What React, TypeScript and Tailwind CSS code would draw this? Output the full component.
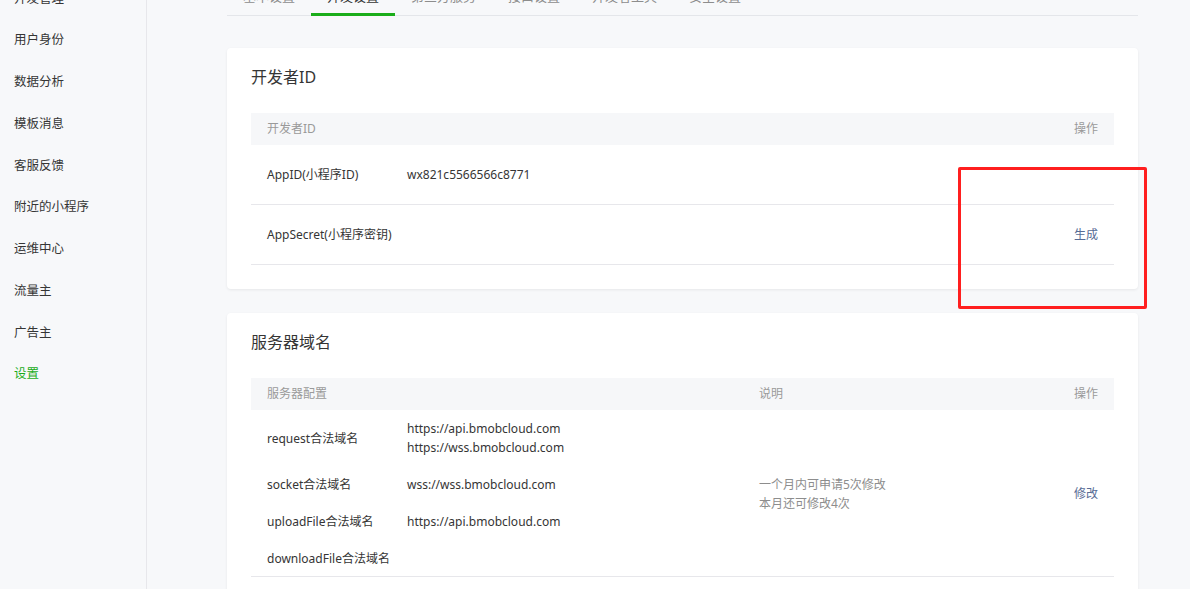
const menu = ["开发管理", "用户身份", "数据分析", "模板消息", "客服反馈", "附近的小程序", "运维中心", "流量主", "广告主", "设置"];
const tabs = ["基本设置", "开发设置", "第三方服务", "接口设置", "开发者工具", "安全设置"];

const domains = [
  { name: "request合法域名", values: ["https://api.bmobcloud.com", "https://wss.bmobcloud.com"] },
  { name: "socket合法域名", values: ["wss://wss.bmobcloud.com"] },
  { name: "uploadFile合法域名", values: ["https://api.bmobcloud.com"] },
  { name: "downloadFile合法域名", values: [] as string[] },
];

function Card({ title, children }: { title: string; children: React.ReactNode }) {
  return (
    <section className="rounded-[4px] bg-white px-6 pt-[17px] pb-6 shadow-[0_1px_3px_rgba(0,0,0,0.07)]">
      <h2 className="mb-6 h-6 text-[16px] leading-6 text-[#353535]">{title}</h2>
      {children}
    </section>
  );
}

export default function App() {
  return (
    <div className="relative h-[589px] overflow-hidden bg-[#f7f8fa] font-['Noto_Sans','Noto_Sans_CJK_SC',sans-serif] text-[12px] text-[#353535]">
      <div className="-mt-[24px] flex">
        <aside className="h-[640px] w-[147px] shrink-0 border-r border-[#e7e7eb] bg-[#f7f8fa] pt-[2px]">
          {menu.map((item) => (
            <div key={item} className={`flex h-[41.75px] items-center pl-[14px] text-[12.5px] ${item === "设置" ? "text-[#1aad19]" : "text-[#353535]"}`}>
              {item}
            </div>
          ))}
        </aside>

        <main className="pl-[80px]">
          <div className="w-[911px]">
            <nav className="flex h-[40px] border-b border-[#e4e6ea]">
              {tabs.map((tab) => (
                <div key={tab} className={`relative px-4 text-[13px] leading-[40px] ${tab === "开发设置" ? "text-[#353535]" : "text-[#8d8d8d]"}`}>
                  {tab}
                  {tab === "开发设置" && <span className="absolute inset-x-0 -bottom-px h-[3px] bg-[#1aad19]" />}
                </div>
              ))}
            </nav>

            <div className="mt-8 flex flex-col gap-6">
              <Card title="开发者ID">
                <div className="flex h-8 items-center justify-between bg-[#f6f7f9] px-4 text-[#9a9a9a]">
                  <span>开发者ID</span>
                  <span>操作</span>
                </div>
                <div className="flex h-[60px] items-center border-b border-[#e7e7eb] px-4">
                  <span className="w-[140px]">AppID(小程序ID)</span>
                  <span>wx821c5566566c8771</span>
                </div>
                <div className="flex h-[60px] items-center justify-between border-b border-[#e7e7eb] px-4">
                  <span>AppSecret(小程序密钥)</span>
                  <a className="text-[#576b95]">生成</a>
                </div>
              </Card>

              <Card title="服务器域名">
                <div className="flex h-8 items-center bg-[#f6f7f9] px-4 text-[#9a9a9a]">
                  <span className="w-[492px]">服务器配置</span>
                  <span className="flex-1">说明</span>
                  <span>操作</span>
                </div>
                <div className="flex items-center border-b border-[#e7e7eb] px-4 pt-[9px] pb-[8px]">
                  <div className="flex w-[492px] flex-col gap-[18px] leading-[19px]">
                    {domains.map((d) => (
                      <div key={d.name} className="flex">
                        <span className="w-[140px] shrink-0 self-center">{d.name}</span>
                        <div className="flex flex-col">
                          {d.values.map((v) => (
                            <span key={v}>{v}</span>
                          ))}
                        </div>
                      </div>
                    ))}
                  </div>
                  <div className="flex flex-1 flex-col leading-[19px] text-[#8d8d8d]">
                    <span>一个月内可申请5次修改</span>
                    <span>本月还可修改4次</span>
                  </div>
                  <a className="text-[#576b95]">修改</a>
                </div>
              </Card>
            </div>
          </div>
        </main>
      </div>

      <div className="absolute left-[958px] top-[167px] h-[142px] w-[189px] rounded-[2px] border-[3px] border-[#ff1f1f]" />
    </div>
  );
}
